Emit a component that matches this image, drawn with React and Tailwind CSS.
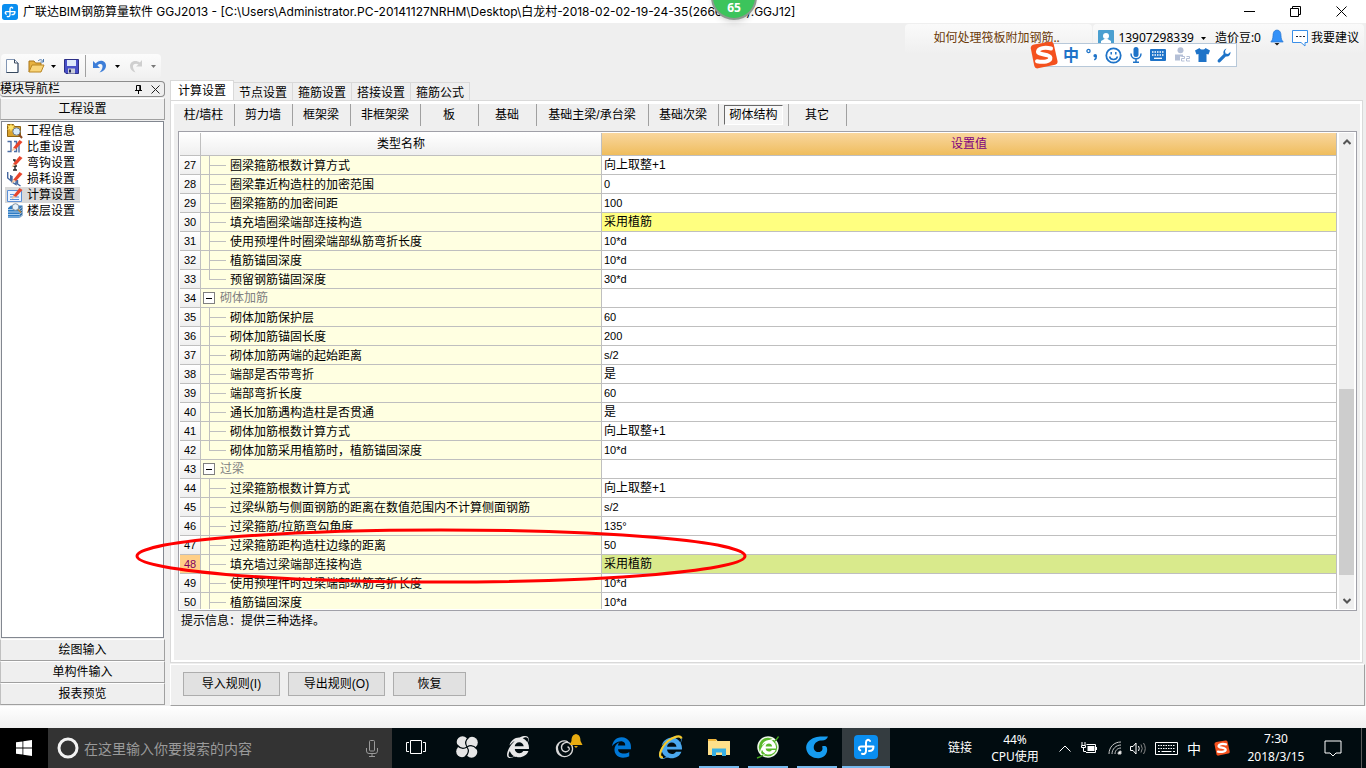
import { FaInternetExplorer, FaEdgeLegacy } from 'react-icons/fa6'

const tabs = ['计算设置', '节点设置', '箍筋设置', '搭接设置', '箍筋公式']

const members = [
  { label: '柱/墙柱', width: 'w-[61px]' },
  { label: '剪力墙', width: 'w-[58px]' },
  { label: '框架梁', width: 'w-[58px]' },
  { label: '非框架梁', width: 'w-[70px]' },
  { label: '板', width: 'w-[58px]' },
  { label: '基础', width: 'w-[58px]' },
  { label: '基础主梁/承台梁', width: 'w-[112px]' },
  { label: '基础次梁', width: 'w-[70px]' },
  { label: '砌体结构', width: 'w-[70px]', active: true },
  { label: '其它', width: 'w-[58px]' },
]

const rows = [
  { id: 27, name: '圈梁箍筋根数计算方式', value: '向上取整+1' },
  { id: 28, name: '圈梁靠近构造柱的加密范围', value: '0' },
  { id: 29, name: '圈梁箍筋的加密间距', value: '100' },
  { id: 30, name: '填充墙圈梁端部连接构造', value: '采用植筋', changed: true },
  { id: 31, name: '使用预埋件时圈梁端部纵筋弯折长度', value: '10*d' },
  { id: 32, name: '植筋锚固深度', value: '10*d' },
  { id: 33, name: '预留钢筋锚固深度', value: '30*d', last: true },
  { id: 34, name: '砌体加筋', value: '', group: true },
  { id: 35, name: '砌体加筋保护层', value: '60' },
  { id: 36, name: '砌体加筋锚固长度', value: '200' },
  { id: 37, name: '砌体加筋两端的起始距离', value: 's/2' },
  { id: 38, name: '端部是否带弯折', value: '是' },
  { id: 39, name: '端部弯折长度', value: '60' },
  { id: 40, name: '通长加筋遇构造柱是否贯通', value: '是' },
  { id: 41, name: '砌体加筋根数计算方式', value: '向上取整+1' },
  { id: 42, name: '砌体加筋采用植筋时，植筋锚固深度', value: '10*d', last: true },
  { id: 43, name: '过梁', value: '', group: true },
  { id: 44, name: '过梁箍筋根数计算方式', value: '向上取整+1' },
  { id: 45, name: '过梁纵筋与侧面钢筋的距离在数值范围内不计算侧面钢筋', value: 's/2' },
  { id: 46, name: '过梁箍筋/拉筋弯勾角度', value: '135°' },
  { id: 47, name: '过梁箍筋距构造柱边缘的距离', value: '50' },
  { id: 48, name: '填充墙过梁端部连接构造', value: '采用植筋', selected: true },
  { id: 49, name: '使用预埋件时过梁端部纵筋弯折长度', value: '10*d' },
  { id: 50, name: '植筋锚固深度', value: '10*d' },
]

function AppLogo({ size }) {
  return (
    <svg width={size} height={size} viewBox="0 0 24 24" fill="none">
      <rect width="24" height="24" rx="4" fill="#0a8ef0" />
      <path
        d="M16 6C14.500 4 12 4.800 12 7.500V16c0 2.500-2 3.500-4 2.800M6.300 15.300C4 14 4.500 11.500 7 11.500h12.500c0 2.500-1.500 4.500-4.500 4.500"
        stroke="#fff"
        strokeWidth="2"
        strokeLinecap="round"
        strokeLinejoin="round"
      />
    </svg>
  )
}

function SogouLogo({ size }) {
  return (
    <svg width={size} height={size} viewBox="0 0 28 28" fill="none">
      <path d="M4 3.500 20 .8q3-.5 3.700 2.200L27.500 20q.6 3-2.400 3.700L8 27.300q-3 .5-3.700-2.300L.8 7.500Q.4 4.200 4 3.500Z" fill="#f4511e" />
      <path
        d="M21 7.500C15 6 8.500 7 8 10.500c-.4 3.700 12 2.300 12.400 6.200.3 3.800-7 5-13.400 3.500"
        stroke="#fff"
        strokeWidth="4"
        strokeLinecap="round"
      />
    </svg>
  )
}

function Caret({ className = 'text-black' }) {
  return (
    <svg className={className} width="5" height="3" viewBox="0 0 5 3">
      <path d="M0 0h5L2.500 3z" fill="currentColor" />
    </svg>
  )
}

function TitleBar() {
  return (
    <header className="flex h-[23px] shrink-0 items-center bg-white pr-[2px] pl-[2px] text-black">
      <AppLogo size={16} />
      <h1 className="ml-[5px] font-['Inter','Noto_Sans_CJK_SC',sans-serif] text-[12px] whitespace-nowrap">
        广联达BIM钢筋算量软件 GGJ2013 - [C:\Users\Administrator.PC-20141127NRHM\Desktop\白龙村-2018-02-02-19-24-35(2666规则).GGJ12]
      </h1>
      <div className="ml-auto flex">
        <button className="flex w-[46px] justify-center" aria-label="最小化">
          <svg width="11" height="11" viewBox="0 0 11 11"><path d="M0 5.500h11" stroke="#000" /></svg>
        </button>
        <button className="flex w-[46px] justify-center" aria-label="还原">
          <svg width="11" height="11" viewBox="0 0 11 11" fill="none" stroke="#000">
            <path d="M.5 2.500h8v8h-8zM2.500 2.500v-2h8v8h-2" />
          </svg>
        </button>
        <button className="flex w-[46px] justify-center" aria-label="关闭">
          <svg width="11" height="11" viewBox="0 0 11 11"><path d="m.5.5 10 10m0-10-10 10" stroke="#000" /></svg>
        </button>
      </div>
    </header>
  )
}

function AccountBar() {
  return (
    <div className="flex h-[31px] shrink-0 justify-end pt-px pr-[2px] text-[12px] text-black">
      <a href="#help" className="flex h-[30px] w-[187px] items-start rounded bg-linear-to-b from-[#fafafa] to-[#efefef] pt-[5px] pl-7 text-[#6b3a08]">
        如何处理筏板附加钢筋..
      </a>
      <div className="ml-px flex h-[30px] items-start rounded bg-linear-to-b from-[#fafafa] to-[#efefef] pt-[5px] pr-[5px] pl-[5px]">
        <svg className="mt-px" width="16" height="16" viewBox="0 0 16 16">
          <rect width="16" height="16" rx="1" fill="#4a9fd0" />
          <circle cx="8" cy="6" r="3" fill="#fff" />
          <path d="M3 13.500V11l3.500-2h3l3.500 2v2.500z" fill="#fff" />
        </svg>
        <button className="ml-1 flex items-center gap-[7px]">13907298339 <Caret /></button>
        <span className="ml-[9px]">造价豆:0</span>
        <svg className="ml-[9px]" width="14" height="18" viewBox="0 0 14 18">
          <path d="M7 1C4 1 3 4 3 6.500 3 10 2 11.500.8 13h12.400C12 11.500 11 10 11 6.500 11 4 10 1 7 1Z" fill="#3391f8" stroke="#2574d0" strokeWidth=".7" />
          <path d="M4.500 14h5L7 16.500z" fill="#1c1c1c" />
        </svg>
        <button className="ml-2 flex gap-[3px]">
          <svg className="mt-px" width="16" height="17" viewBox="0 0 16 17" fill="none">
            <path d="M.5.500h15v12h-2.500v3.500l-4-3.500H.5z" fill="#fff" stroke="#3a8fe8" />
            <path d="M4 6.500h9" stroke="#223" strokeDasharray="2 1.500" />
          </svg>
          我要建议
        </button>
      </div>
    </div>
  )
}

function ToolBar() {
  return (
    <div className="flex h-[26px] shrink-0">
      <div className="ml-px flex h-6 w-[160px] items-center rounded bg-linear-to-b from-[#fcfcfc] to-[#f1f1f1] pl-[5px]">
        <button aria-label="新建">
          <svg width="13" height="16" viewBox="0 0 13 16">
            <path d="M.5 1.500h8l3.500 3.500v9.500H.5z" fill="#fdfefe" stroke="#8296b4" />
            <path d="M12 5v9.500H.5M8.500 1.500V5H12" fill="none" stroke="#38495e" />
          </svg>
        </button>
        <button className="ml-[9px]" aria-label="打开">
          <svg width="17" height="16" viewBox="0 0 17 16">
            <path d="M1 14V3h5l1.500 2H13v3" fill="#e8b240" stroke="#a87418" />
            <path d="m1 14 3-7h12l-3 7z" fill="#f9d57a" stroke="#b98521" />
            <path d="M10 3c2-2 4-1.500 5 .5M15.500 1v3h-3" fill="none" stroke="#4774aa" />
          </svg>
        </button>
        <span className="ml-[6px]"><Caret /></span>
        <button className="ml-2" aria-label="保存">
          <svg width="15" height="15" viewBox="0 0 15 15">
            <path d="M.5.500h14v14H2l-1.500-1.500z" fill="#4850c8" stroke="#2c2f86" />
            <path d="M3 1h9v6H3z" fill="#dfe9fb" />
            <path d="M4 9.500h7v5H4z" fill="#c9cdd8" />
            <path d="M5 10.500h2v3H5z" fill="#222a58" />
          </svg>
        </button>
        <span className="ml-[6px] h-[22px] w-px bg-[#a0a0a0]" />
        <button className="ml-[7px]" aria-label="撤销">
          <svg width="14" height="14" viewBox="0 0 14 14">
            <path d="M0 2v7h7L4.500 6.500C7 4 10 5 9.500 8c-.2 2-1.500 4-3 5.500C10.500 12.500 13 10 13 6.500 13 1.500 6 0 2.800 4.500z" fill="#3d7ed8" />
          </svg>
        </button>
        <span className="ml-2"><Caret /></span>
        <button className="ml-[9px]" aria-label="恢复">
          <svg width="14" height="14" viewBox="0 0 14 14">
            <path d="M13 1v6.500H7L9.500 5.500C7 4 3.500 5 4 8c.2 2 1.500 4 2.500 5.500C3 12.500 1 10 1 7 1 2 7 .5 10.800 3.500z" fill="#cfcfcf" />
          </svg>
        </button>
        <span className="ml-2"><Caret className="text-[#777]" /></span>
      </div>
    </div>
  )
}

const Pencil = () => (
  <>
    <path d="m6 9 6.500-8L15.500 3 9 10z" fill="#e8452c" />
    <path d="m6 9-1.500 3.500L9 10z" fill="#f6c9a0" />
  </>
)

const navItems = [
  {
    label: '工程信息',
    icon: (
      <>
        <path d="M.5 1.500h6l1 2h6v10H.5z" fill="#d9a22c" stroke="#8f6515" />
        <path d="m0 2 3 1 1-3 1 3 3-1-2 2.500L8 7 5 6 4 9 3 6 0 7l2-2.500z" fill="#ffe36a" />
        <circle cx="9.500" cy="8.500" r="3.700" fill="#d7ebfa" stroke="#6f7c8a" />
        <path d="m12 11.500 3 3.500" stroke="#8a4a20" strokeWidth="2" />
      </>
    ),
  },
  {
    label: '比重设置',
    icon: (
      <>
        <path d="M.5 2.500H4v10H.5M7 2.500h2.500v10H7M12 4v9.500" fill="none" stroke="#4c6ea5" strokeWidth="1.400" />
        <Pencil />
      </>
    ),
  },
  {
    label: '弯钩设置',
    icon: (
      <>
        <path d="M6 5h2v2M8 9v6M6 15h4M6 11h4" fill="none" stroke="#222" strokeWidth="1.400" />
        <Pencil />
      </>
    ),
  },
  {
    label: '损耗设置',
    icon: (
      <>
        <path d="M.7 1v6l3 2.500V4M5 5v6l4 2.500V8M10.500 9v4l3 2" fill="none" stroke="#4668a0" strokeWidth="1.400" />
        <Pencil />
      </>
    ),
  },
  {
    label: '计算设置',
    active: true,
    icon: (
      <>
        <path d="M.5 3.500h14v11H.5z" fill="#eaf3ff" stroke="#5b8fd6" />
        <path d="M3 7.500h4M3 10h9M3 12.500h9" stroke="#5b8fd6" />
        <Pencil />
      </>
    ),
  },
  {
    label: '楼层设置',
    icon: (
      <>
        <path d="M1 5 4 2.500h11.500L12.500 5v10H1z" fill="#2f7cc4" />
        <path d="M12.500 5 15.500 2.500v10l-3 2.500z" fill="#1c5a98" />
        <path d="M1 6.500h11.500l3-2.500M1 9h11.500l3-2.500M1 11.500h11.500l3-2.500M1 14h11.500l3-2.500" fill="none" stroke="#cfe5f8" strokeWidth=".8" />
        <circle cx="8.500" cy="4" r="3.300" fill="#e6f2fb" stroke="#8292a2" />
        <path d="m11 6.500 3 3" stroke="#b88438" strokeWidth="1.600" />
      </>
    ),
  },
]

function SideButton({ children }) {
  return (
    <button className="h-[22px] shrink-0 border border-t-white border-r-[#a0a0a0] border-b-[#a0a0a0] border-l-[#c0c0c0] bg-[#efefef] text-[12px] leading-[21px]">
      {children}
    </button>
  )
}

function SidePanel() {
  return (
    <aside className="mt-px mb-px flex w-[165px] shrink-0 flex-col">
      <div className="flex h-4 shrink-0 items-center rounded-sm border border-l-0 border-[#8c8c8c] pr-1">
        <h2 className="text-[12px] leading-[14px]">模块导航栏</h2>
        <button className="ml-auto" aria-label="固定">
          <svg width="9" height="10" viewBox="0 0 9 10" fill="none" stroke="#000">
            <path d="M2.500 6V1.500h4V6M1 6.500h7M4.500 7v3" />
            <path d="M5.800 1.500V6" />
          </svg>
        </button>
        <button className="ml-2" aria-label="关闭面板">
          <svg width="9" height="9" viewBox="0 0 9 9" stroke="#222"><path d="m.5.500 8 8m0-8-8 8" /></svg>
        </button>
      </div>
      <div className="mt-px flex flex-col">
        <SideButton>工程设置</SideButton>
      </div>
      <ul className="mx-px mt-px mb-px min-h-0 flex-1 border border-[#828790] bg-white pt-px pl-[3px] text-[12px]">
        {navItems.map((item) => (
          <li key={item.label}>
            <a
              href={`#${item.label}`}
              className={item.active ? 'flex h-4 w-[75px] items-center bg-[#d9d9d9] pl-[2px]' : 'flex h-4 w-[75px] items-center pl-[2px]'}
            >
              <svg width="16" height="16" viewBox="0 0 16 16">{item.icon}</svg>
              <span className="ml-1 leading-[18px] whitespace-nowrap">{item.label}</span>
            </a>
          </li>
        ))}
      </ul>
      <SideButton>绘图输入</SideButton>
      <SideButton>单构件输入</SideButton>
      <SideButton>报表预览</SideButton>
    </aside>
  )
}

function NameCell({ row }) {
  if (row.group) {
    return (
      <div className="flex h-[18px] items-center pl-[2px] text-[#808080]">
        <button className="flex h-3 w-3 items-center justify-center border border-[#808080] bg-white" aria-label="折叠">
          <span className="h-px w-[6px] bg-black" />
        </button>
        <span className="ml-[5px] leading-5">{row.name}</span>
      </div>
    )
  }
  return (
    <div className="flex h-[18px]">
      <span className="ml-2 flex w-[17px] flex-col">
        <span className="h-[10px] border-b border-l border-[#bfbfbf]" />
        {!row.last && <span className="flex-1 border-l border-[#bfbfbf]" />}
      </span>
      <span className="ml-1 leading-5 whitespace-nowrap">{row.name}</span>
    </div>
  )
}

function valueBackground(row) {
  if (row.selected) return 'bg-[#d9ea8c]'
  if (row.changed) return 'bg-[#ffff80]'
  return 'bg-white'
}

// values without Chinese characters are set one size smaller
function isLatin(text) {
  return /^[\x20-\xff]+$/.test(text)
}

function SettingsTable() {
  return (
    <div className="mr-[3px] ml-1 flex min-h-0 flex-1 border border-[#a0a0a8] bg-white p-px">
      <div className="min-h-0 min-w-0 flex-1 overflow-hidden">
        <table className="w-full table-fixed border-separate border-spacing-0 text-[12px]">
          <colgroup>
            <col className="w-[21px]" />
            <col className="w-[401px]" />
            <col />
          </colgroup>
          <thead>
            <tr className="h-[23px]">
              <th className="border-r border-b border-[#bfbfbf] bg-linear-to-b from-white to-[#efefef] p-0" aria-label="序号" />
              <th className="border-r border-b border-[#bfbfbf] bg-linear-to-b from-white to-[#efefef] p-0 font-normal">类型名称</th>
              <th className="border-r border-b border-[#bfbfbf] bg-linear-to-b from-[#f9d69c] to-[#efbd5c] p-0 font-normal text-[#800080]">设置值</th>
            </tr>
          </thead>
          <tbody>
            {rows.map((row) => (
              <tr key={row.id}>
                <th
                  className={[
                    'border-r border-b border-[#bfbfbf] p-0 text-[11px] leading-[18px] font-normal',
                    row.selected ? 'bg-[#ffcf87] text-[#800060]' : 'bg-linear-to-b from-white to-[#efefef]',
                  ].join(' ')}
                >
                  {row.id}
                </th>
                <td className="border-r border-b border-[#bfbfbf] bg-[#ffffe1] p-0"><NameCell row={row} /></td>
                <td
                  className={[
                    'border-r border-b border-[#bfbfbf] p-0 pl-[2px] leading-[18px]',
                    valueBackground(row),
                    isLatin(row.value) ? 'text-[11px]' : 'text-[12px]',
                  ].join(' ')}
                >
                  {row.value}
                </td>
              </tr>
            ))}
          </tbody>
        </table>
      </div>
      <div className="mr-px ml-[2px] flex w-[15px] flex-col bg-[#efefef]">
        <button className="flex h-[17px] items-center justify-center" aria-label="向上滚动">
          <svg width="8" height="6" viewBox="0 0 8 6" fill="none"><path d="m.5 5 3.500-3.500L7.500 5" stroke="#555" strokeWidth="2" /></svg>
        </button>
        <div className="flex flex-1 flex-col">
          <span className="grow-[239]" />
          <span className="grow-[186] bg-[#cdcdcd]" />
          <span className="grow-[17]" />
        </div>
        <button className="flex h-[17px] items-center justify-center" aria-label="向下滚动">
          <svg width="8" height="6" viewBox="0 0 8 6" fill="none"><path d="m.5 1 3.500 3.500L7.500 1" stroke="#555" strokeWidth="2" /></svg>
        </button>
      </div>
    </div>
  )
}

function MainPanel() {
  return (
    <main className="ml-[5px] flex min-w-0 flex-1 flex-col pr-px text-[12px]">
      <div className="flex h-5 shrink-0 items-end">
        {tabs.map((tab, index) => (
          <button
            key={tab}
            className={
              index === 0
                ? 'h-5 w-16 border border-b-0 border-[#d9d9d9] bg-white leading-[18px]'
                : 'h-[18px] w-[59px] border border-b-0 border-l-0 border-[#d9d9d9] leading-5'
            }
          >
            {tab}
          </button>
        ))}
      </div>
      <section className="mr-[2px] flex min-h-0 flex-1 flex-col border border-[#d9d9d9] bg-white p-[3px] pr-[2px] pb-[2px]">
        <div className="flex min-h-0 flex-1 flex-col bg-[#efefef]">
          <div className="mb-[5px] flex h-[22px] shrink-0">
            {members.map((item) => (
              <div key={item.label} className={`flex shrink-0 border-r border-[#a0a0a0] ${item.width}`}>
                <button
                  className={
                    item.active
                      ? 'mt-px mr-[5px] ml-[5px] h-5 flex-1 border border-t-[#696969] border-r-white border-b-white border-l-[#696969] bg-[#f7f7f7] leading-[19px] whitespace-nowrap'
                      : 'flex-1 pr-px leading-[22px] whitespace-nowrap'
                  }
                >
                  {item.label}
                </button>
              </div>
            ))}
          </div>
          <SettingsTable />
          <p className="h-[49px] shrink-0 pl-[7px] leading-5">提示信息：提供三种选择。</p>
        </div>
      </section>
      <footer className="mt-px flex h-[42px] shrink-0 items-center gap-2 border border-t-white border-r-[#a0a0a0] border-b-[#a0a0a0] border-l-white pb-[3px] pl-3">
        <button className="h-6 w-[97px] border border-[#adadad] bg-[#e1e1e1]">导入规则(I)</button>
        <button className="h-6 w-[97px] border border-[#adadad] bg-[#e1e1e1]">导出规则(O)</button>
        <button className="h-6 w-[73px] border border-[#adadad] bg-[#e1e1e1]">恢复</button>
      </footer>
    </main>
  )
}

function SogouBar() {
  return (
    <div className="absolute top-[43px] left-[1043px] flex h-6 w-[194px] items-center border border-[#b7c8d9] bg-white text-[#1e73c8]">
      <span className="-ml-[14px] shrink-0"><SogouLogo size={28} /></span>
      <span className="ml-[5px] text-[16px] leading-5 font-bold">中</span>
      <svg className="ml-[7px]" width="12" height="16" viewBox="0 0 12 16" fill="none">
        <circle cx="2.500" cy="4" r="1.600" stroke="currentColor" strokeWidth="1.300" />
        <circle cx="9.200" cy="8.700" r="1.800" fill="currentColor" />
        <path d="M10.300 9c.3 2-.5 3-2 4" stroke="currentColor" strokeWidth="1.500" />
      </svg>
      <svg className="ml-[7px]" width="17" height="17" viewBox="0 0 17 17" fill="none" stroke="currentColor">
        <circle cx="8.500" cy="8.500" r="7.200" strokeWidth="1.800" />
        <path d="M6.200 5v2.500M10.800 5v2.500M4.500 9.500c1 4 7 4 8 0" strokeWidth="1.500" />
      </svg>
      <svg className="ml-2" width="12" height="16" viewBox="0 0 12 16" fill="none">
        <rect x="3.500" y="0" width="5" height="10" rx="2.500" fill="currentColor" />
        <path d="M1 6.500c0 7 10 7 10 0M6 12v3.500M3 15.300h6" stroke="currentColor" strokeWidth="1.500" />
      </svg>
      <svg className="ml-2" width="16" height="12" viewBox="0 0 16 12">
        <rect width="16" height="12" rx="1" fill="currentColor" />
        <path d="M2 3h12M2 6h12" stroke="#fff" strokeWidth="1.500" strokeDasharray="1.500 1" />
        <path d="M4 9.300h8" stroke="#fff" strokeWidth="1.300" />
      </svg>
      <svg className="ml-2" width="17" height="16" viewBox="0 0 17 16" fill="#b4bfd6">
        <circle cx="6.500" cy="3.200" r="3" />
        <path d="M1 7.500h8v2H6v4H1z" />
        <path d="M7.500 9.500h3v2h-3v2.500h3M12.500 9.500h3v2h-3v2.500h3.500" fill="none" stroke="#b4bfd6" />
      </svg>
      <svg className="ml-1" width="15" height="14" viewBox="0 0 15 14">
        <path d="M4.500 0c1 2 5 2 6 0L15 2.500 13.500 6.500 11.500 6v8h-8V6l-2 .5L0 2.500z" fill="currentColor" />
      </svg>
      <svg className="ml-[7px]" width="14" height="15" viewBox="0 0 14 15">
        <path d="M9.500.5C6.500 1.500 6 4 6.700 6L.8 12q-.8 1.500.5 2.300 1 .5 2-.4l5.500-5.500c2.500.7 5-1 4.700-4.600L11 6 8.500 5.500 8 3z" fill="currentColor" />
      </svg>
    </div>
  )
}

function TaskItem({ children, label, running, active }) {
  return (
    <button
      aria-label={label}
      className={['flex h-10 w-12 flex-col items-center', active ? 'bg-[#343c40]' : ''].join(' ')}
    >
      <span className="flex flex-1 items-center">{children}</span>
      <span className={['h-[2px]', active ? 'w-12' : 'w-10', running ? 'bg-[#76b9ed]' : ''].join(' ')} />
    </button>
  )
}

function Taskbar() {
  return (
    <nav className="flex h-10 shrink-0 bg-[#010c10] text-[12px] text-white">
      <button className="flex w-12 items-center justify-center bg-black" aria-label="开始">
        <svg width="16" height="16" viewBox="0 0 16 16" fill="#fff">
          <path d="M0 2.300 6.500 1.400v6.200H0zM7.300 1.300 16 0v7.600H7.300zM0 8.400h6.500v6.200L0 13.700zM7.300 8.400H16V16l-8.700-1.300z" />
        </svg>
      </button>
      <label className="flex w-[344px] items-center bg-[#333] pl-[9px]">
        <svg className="shrink-0" width="22" height="22" viewBox="0 0 22 22" fill="none">
          <circle cx="11" cy="11" r="9" stroke="#f2f2f2" strokeWidth="3" />
        </svg>
        <input
          aria-label="搜索"
          placeholder="在这里输入你要搜索的内容"
          className="ml-[5px] w-[270px] bg-transparent text-[14px] placeholder:text-[#9a9a9a] focus:outline-none"
        />
        <svg className="ml-[12px]" width="12" height="17" viewBox="0 0 12 17" fill="none" stroke="#9a9a9a">
          <rect x="3.500" y=".5" width="5" height="10.500" rx="1" />
          <path d="M.5 8v3q0 2.500 2.500 2.500h6q2.500 0 2.500-2.500V8M6 13.500v3M3 16.500h6" />
        </svg>
      </label>
      <div className="flex gap-[3px]">
        <TaskItem label="任务视图">
          <svg width="20" height="14" viewBox="0 0 20 14" fill="none" stroke="#fff">
            <path d="M4.500.5h11v13h-11zM3 2.500H.5v9H3M17 2.500h2.500v9H17" />
          </svg>
        </TaskItem>
        <TaskItem label="风车">
          <svg width="22" height="22" viewBox="0 0 22 22" fill="#e6e6e6">
            <circle cx="6.500" cy="6" r="5.800" />
            <circle cx="16" cy="6.500" r="5.800" />
            <circle cx="15.500" cy="16" r="5.800" />
            <circle cx="6" cy="15.500" r="5.800" />
            <circle cx="11" cy="11" r="4" />
            <path
              d="M11 11C9 8 9.500 4 13 1M11 11C14 9 18 9.500 21 13M11 11C13 14 12.500 18 9 21M11 11C8 13 4 12.500 1 9"
              fill="none"
              stroke="#010c10"
              strokeWidth="1.200"
            />
          </svg>
        </TaskItem>
        <TaskItem label="浏览器">
          <FaInternetExplorer size={22} color="#e8e8e8" />
        </TaskItem>
        <TaskItem label="提醒">
          <svg width="30" height="28" viewBox="0 0 30 28" fill="none">
            <path d="M14 9C9 6 2 10 2.500 16c.5 7 8 9.500 13 6 4-3 4-9 .5-11.500-4-2.500-9 0-8.500 4.500.5 4 5.500 5 7.500 2 .8-1.500 0-3-1.500-3M5 10c-3 4-1.500 11 3 13" stroke="#d8d8d8" strokeWidth="1.300" />
            <path d="M22 1c-4 1-4.500 4-4.500 7L15.500 12h13l-2-4c0-3-.5-6-4.500-7Z" fill="#e8ac10" />
            <path d="M20 13h4l-2 2z" fill="#e8ac10" />
          </svg>
        </TaskItem>
      </div>
      <div className="ml-1 flex gap-px">
        <TaskItem label="Edge"><FaEdgeLegacy size={21} color="#0078d7" /></TaskItem>
        <TaskItem label="Internet Explorer">
          <svg width="25" height="24" viewBox="0 0 25 24" fill="none">
            <FaInternetExplorer x="1" y="1" size={23} color="#4aa8ee" />
            <path d="M5 22.500C-1 23 3 12 10 6 15.500 1.500 22.500-.5 23.500 3.500" stroke="#f5c92c" strokeWidth="2.200" />
          </svg>
        </TaskItem>
        <TaskItem label="文件资源管理器" running>
          <svg width="22" height="19" viewBox="0 0 22 19">
            <path d="M0 1h8l1.500 2H22v14H0z" fill="#ffe08a" />
            <path d="M0 1h8v2H0z" fill="#f0b63c" />
            <path d="M4 18v-7.500h14V18h-4v-3.500H8V18z" fill="#38b0e4" />
          </svg>
        </TaskItem>
        <TaskItem label="360浏览器" running>
          <svg width="24" height="24" viewBox="0 0 24 24" fill="none">
            <circle cx="12" cy="12" r="10" fill="#58b82a" stroke="#eef8e8" strokeWidth="1.500" />
            <FaInternetExplorer x="4" y="4" size={16} color="#fff" />
            <path d="M1 23C3 22.500 5 21.500 7 20M19 6c1.500-1.500 2.800-3 3.500-4.500" stroke="#43a51c" strokeWidth="1.500" />
          </svg>
        </TaskItem>
        <TaskItem label="广联达G+" running>
          <svg width="24" height="23" viewBox="0 0 24 23">
            <path d="M23 .5C17 .5 14 0 10 1.500 4 3.500 0 8 1.500 14c1.500 6 8 9 13.500 8 5-1 8-5 7-10-.5-2-2.500-2.500-5-1.500 1.500 3-.5 5.500-3 5.500-4 .5-6-3-5-6.500 1-3 4-5 8-5 3 0 5-1.500 6-4Z" fill="#169cf0" />
          </svg>
        </TaskItem>
        <TaskItem label="GGJ2013" running active><AppLogo size={24} /></TaskItem>
      </div>
      <div className="ml-auto flex items-center">
        <span>链接</span>
        <span className="ml-[18px] flex w-[50px] flex-col text-center leading-[17px]">
          <span>44%</span>
          <span className="whitespace-nowrap">CPU使用</span>
        </span>
        <svg className="ml-[19px]" width="12" height="7" viewBox="0 0 12 7" fill="none"><path d="m.5 6.500 5.500-5.500 5.500 5.500" stroke="#fff" /></svg>
        <svg className="ml-[10px]" width="17" height="12" viewBox="0 0 17 12" fill="none" stroke="#fff">
          <path d="M1 0v3M4 0v3M.5 3.500h4v2h-4zM2.500 6v3.500H5M5.500 2.500h9v8H5M15.500 5v3" />
          <path d="M6.500 4h7v5h-7z" fill="#fff" stroke="none" />
        </svg>
        <svg className="ml-[10px]" width="14" height="14" viewBox="0 0 14 14" fill="none" stroke="#c8c8c8">
          <path d="M1 13C1 6 6 1 13 1M4 13c0-5 4-9 9-9M7 13c0-3.500 2.500-6 6-6" />
          <path d="M10 13c0-2 1-3 3-3v3z" fill="#fff" />
        </svg>
        <svg className="ml-2" width="17" height="13" viewBox="0 0 17 13" fill="none" stroke="#fff">
          <path d="M.5 4.500h2.500l3-3.500v11L3 8.500H.5z" />
          <path d="M8.500 4q1.500 2.500 0 5" />
          <path d="M11 2.500q2.500 4 0 8M13.500 1q3.500 5.500 0 11" stroke="#8a8a8a" />
        </svg>
        <svg className="ml-[8px]" width="23" height="13" viewBox="0 0 23 13" fill="none" stroke="#fff">
          <path d="M.5.500h22v12H.5z" />
          <path d="M3 3.500h17M3 6.500h17" strokeDasharray="1.500 1" />
          <path d="M3 9.500h2M6.500 9.500h10M18 9.500h2" />
        </svg>
        <span className="ml-[9px] text-[14px]">中</span>
        <span className="ml-[13px]"><SogouLogo size={16} /></span>
        <time className="ml-[14px] flex w-[64px] flex-col text-center leading-[18px]">
          <span>7:30</span>
          <span>2018/3/15</span>
        </time>
        <button className="ml-4" aria-label="通知">
          <svg width="18" height="17" viewBox="0 0 18 17" fill="none"><path d="M1 1h16v12h-5l-3 3-3-3H1z" stroke="#fff" /></svg>
        </button>
        <span className="mr-1 ml-[19px] h-10 w-px bg-[#5a5a5a]" />
      </div>
    </nav>
  )
}

export default function App() {
  return (
    <div className="relative flex h-screen flex-col overflow-hidden bg-[#efefef] font-['Noto_Sans','Noto_Sans_CJK_SC',sans-serif] text-black">
      <TitleBar />
      <AccountBar />
      <ToolBar />
      <div className="flex min-h-0 flex-1 font-['Liberation_Sans','Noto_Sans_CJK_SC',sans-serif]">
        <SidePanel />
        <MainPanel />
      </div>
      <div className="h-[22px] shrink-0 bg-linear-to-b from-white to-[#f0f0f0]" />
      <Taskbar />

      <div className="absolute -top-[26px] left-[711px] flex h-[46px] w-[46px] items-end justify-center rounded-full border-2 border-[#8d9a90] bg-[#3cc45c] pb-[2px] text-[12px] leading-4 font-bold text-white shadow-md">
        65
      </div>
      <SogouBar />
      <svg className="pointer-events-none absolute top-[528px] left-[135px]" width="614" height="57" viewBox="0 0 614 57" fill="none">
        <ellipse cx="306" cy="28" rx="304" ry="26" stroke="#f00" strokeWidth="3" />
      </svg>
    </div>
  )
}
